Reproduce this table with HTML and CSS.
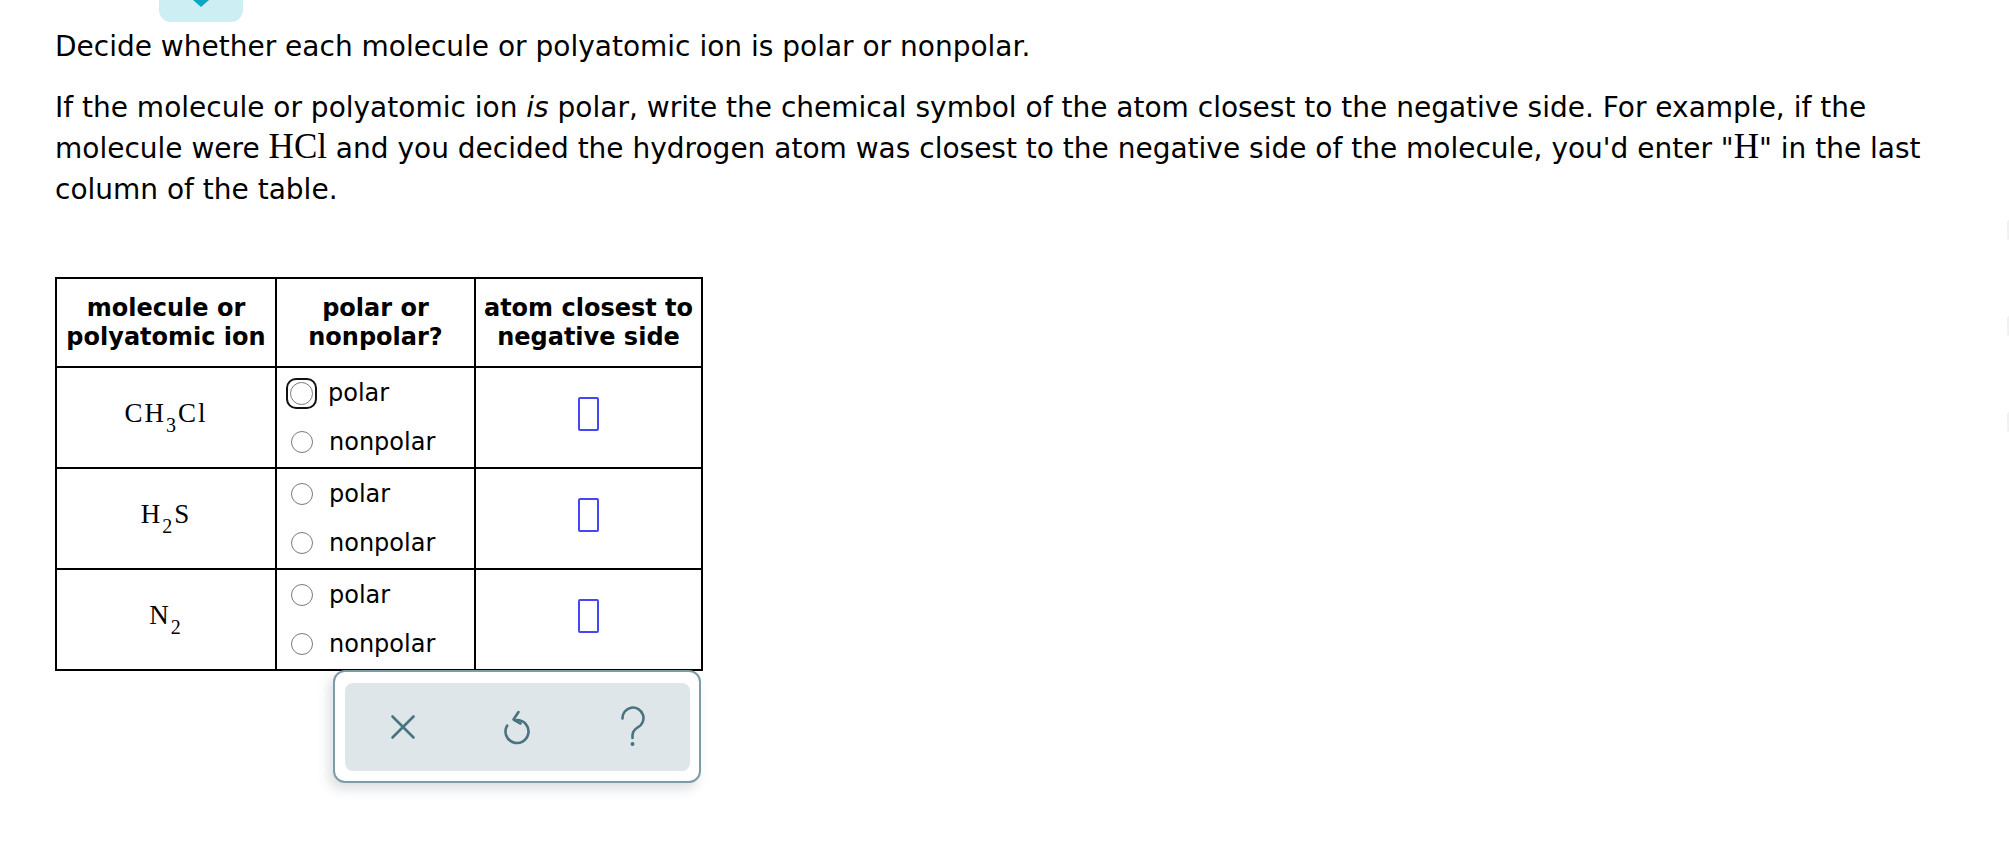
FILE: index.html
```html
<!DOCTYPE html>
<html>
<head>
<meta charset="utf-8">
<link rel="stylesheet" href="styles.css">
</head>
<body>
<div class="tab"><span class="tab-arrow"></span></div>
<div class="edge-marks"><span></span><span></span><span></span></div>
<main class="prompt">
  <p class="para">Decide whether each molecule or polyatomic ion is polar or nonpolar.</p>
  <p class="para para-gap">If the molecule or polyatomic ion <i>is</i> polar, write the chemical symbol of the atom closest to the negative side. For example, if the molecule were <span class="chem-inline">HCl</span> and you decided the hydrogen atom was closest to the negative side of the molecule, you'd enter "<span class="chem-inline">H</span>" in the last column of the table.</p>

  <div class="table-wrap">
    <table class="qtable">
      <thead>
        <tr>
          <th class="c1">molecule or<br>polyatomic ion</th>
          <th class="c2">polar or<br>nonpolar?</th>
          <th class="c3">atom closest to<br>negative side</th>
        </tr>
      </thead>
      <tbody>
        <tr>
          <td class="formula"><span class="chem">CH<sub>3</sub>Cl</span></td>
          <td class="opts">
            <div class="opt"><span class="radio-focus"><span class="radio"></span></span><span class="lbl">polar</span></div>
            <div class="opt"><span class="radio"></span><span class="lbl">nonpolar</span></div>
          </td>
          <td class="answer"><span class="box"></span></td>
        </tr>
        <tr>
          <td class="formula"><span class="chem">H<sub>2</sub>S</span></td>
          <td class="opts">
            <div class="opt"><span class="radio"></span><span class="lbl">polar</span></div>
            <div class="opt"><span class="radio"></span><span class="lbl">nonpolar</span></div>
          </td>
          <td class="answer"><span class="box"></span></td>
        </tr>
        <tr>
          <td class="formula"><span class="chem">N<sub>2</sub></span></td>
          <td class="opts">
            <div class="opt"><span class="radio"></span><span class="lbl">polar</span></div>
            <div class="opt"><span class="radio"></span><span class="lbl">nonpolar</span></div>
          </td>
          <td class="answer"><span class="box"></span></td>
        </tr>
      </tbody>
    </table>
    <div class="tools-row">
      <div class="tools">
        <div class="tools-inner">
          <span class="tool">
            <svg width="26" height="26" viewBox="0 0 26 26"><path d="M2.5 2.5 L23.5 23.5 M23.5 2.5 L2.5 23.5" stroke="#4a7380" stroke-width="2.6" stroke-linecap="round" fill="none"/></svg>
          </span>
          <span class="tool">
            <svg width="30" height="38" viewBox="0 0 30 38"><path d="M14 12 A11.5 11.5 0 1 1 4.2 17.5" stroke="#4a7380" stroke-width="2.6" stroke-linecap="round" fill="none"/><path d="M15.5 4 L10.5 11.5 L17.5 15.5" stroke="#4a7380" stroke-width="2.6" stroke-linecap="round" stroke-linejoin="round" fill="none"/></svg>
          </span>
          <span class="tool">
            <svg width="28" height="42" viewBox="0 0 28 42"><path d="M3.5 12.5 A10.5 10.5 0 1 1 18.5 21.5 C15.5 23.5 13.5 25.5 13.5 29.5 L13.5 32" stroke="#4a7380" stroke-width="2.6" stroke-linecap="round" fill="none"/><circle cx="13.5" cy="38" r="2" fill="#4a7380"/></svg>
          </span>
        </div>
      </div>
    </div>
  </div>
</main>
</body>
</html>
```

FILE: styles.css
```css
html, body {
  margin: 0;
  padding: 0;
  background: #ffffff;
}

body {
  width: 2009px;
  height: 852px;
  overflow: hidden;
  position: relative;
  font-family: "DejaVu Sans", Verdana, sans-serif;
  color: #000;
}

.tab {
  position: absolute;
  top: 0;
  left: 159px;
  width: 84px;
  height: 22px;
  background: #cdeef3;
  border-radius: 0 0 12px 12px;
  display: flex;
  justify-content: center;
}

.tab-arrow {
  width: 0;
  height: 0;
  border-left: 8px solid transparent;
  border-right: 8px solid transparent;
  border-top: 7px solid #0aa6c2;
}

.edge-marks {
  position: absolute;
  right: 0;
  top: 220px;
  display: flex;
  flex-direction: column;
  gap: 76px;
}

.edge-marks span {
  display: block;
  width: 2px;
  height: 20px;
  border-radius: 3px 0 0 3px;
  background: #f0f2f2;
}

.prompt {
  padding: 26px 0 0 55px;
  font-size: 28px;
  line-height: 41px;
}

.para {
  margin: 0;
}

.para-gap {
  margin-top: 20px;
  width: 1900px;
}

.chem-inline {
  font-family: "Liberation Serif", "Times New Roman", serif;
  font-size: 35px;
  line-height: 1;
}

.table-wrap {
  margin-top: 67px;
  width: 646px;
}

.qtable {
  border-collapse: collapse;
  border: 2px solid #000;
  width: 646px;
  table-layout: fixed;
}

.qtable th,
.qtable td {
  border: 2px solid #000;
  padding: 0;
}

.qtable th {
  height: 87px;
  font-size: 24px;
  line-height: 29px;
  font-weight: bold;
  text-align: center;
}

.c1 { width: 218px; }
.c2 { width: 197px; }
.c3 { width: 225px; }

.qtable td {
  height: 99px;
}

.formula {
  text-align: center;
  vertical-align: middle;
}

.chem {
  font-family: "Liberation Serif", "Times New Roman", serif;
  font-size: 27px;
  letter-spacing: 2px;
  position: relative;
  top: -5px;
}

.chem sub {
  font-size: 20px;
  vertical-align: -10px;
  line-height: 0;
}

.opts {
  vertical-align: middle;
  padding: 0 0 0 12px !important;
}

.opt {
  display: flex;
  align-items: center;
  height: 49px;
  font-size: 24px;
}

.radio {
  display: block;
  width: 20px;
  height: 20px;
  border: 1px solid #7a7a7a;
  border-radius: 50%;
  background: #fff;
  margin-left: 2px;
  flex: none;
}

.radio-focus {
  display: flex;
  align-items: center;
  justify-content: center;
  width: 31px;
  height: 31px;
  margin-left: -3px;
  margin-right: -5px;
  border: 2px solid #111;
  border-radius: 10px;
  box-sizing: border-box;
  flex: none;
}

.radio-focus .radio {
  margin-left: 0;
  width: 21px;
  height: 21px;
}

.lbl {
  margin-left: 16px;
}

.answer {
  text-align: center;
  vertical-align: middle;
}

.box {
  display: inline-block;
  width: 17px;
  height: 30px;
  border: 2px solid #4646f5;
  border-radius: 2px;
  vertical-align: middle;
  position: relative;
  top: -5px;
}

.tools-row {
  display: flex;
  justify-content: flex-end;
  margin-top: -1px;
}

.tools {
  width: 368px;
  box-sizing: border-box;
  border: 2px solid #7d9ca6;
  border-radius: 12px;
  padding: 11px 9px 10px 10px;
  background: #fff;
  box-shadow: -4px 6px 12px rgba(60, 80, 90, 0.18);
}

.tools-inner {
  display: flex;
  height: 88px;
  background: #dfe6e9;
  border-radius: 8px;
}

.tool {
  flex: 1;
  display: flex;
  align-items: center;
  justify-content: center;
}
```
